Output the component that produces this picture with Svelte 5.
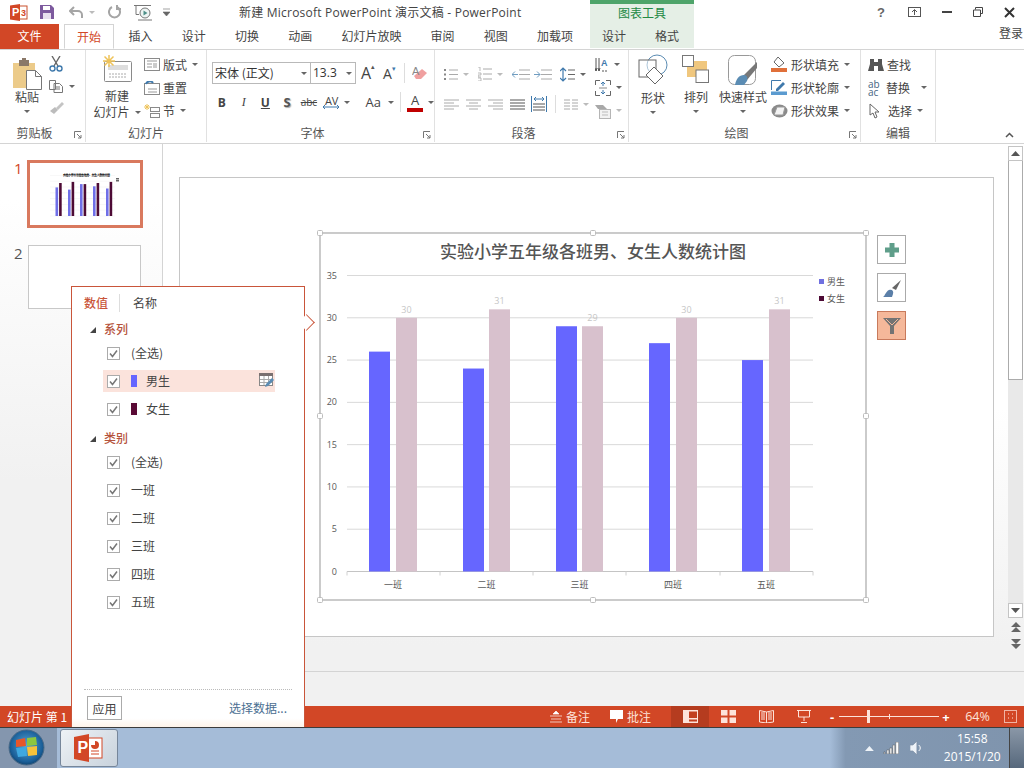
<script>
  const tabs = [['开始',0],['插入',0],['设计',0],['切换',0],['动画',0],['幻灯片放映',0],['审阅',0],['视图',0],['加载项',0]];
  const series = [26,24,29,27,25];
  const female = [30,31,29,30,31];
  const cats = ['一班','二班','三班','四班','五班'];
  const mx = [369,463,556,649,742];
  const fx = [396,489,582,676,769];
  const ticks = [0,5,10,15,20,25,30,35];
  const y0 = 571.5, unit = 8.457;
  const thumbM = [55.5,68,80,93,106];
  const handles = [[320,233],[593,233],[866,233],[320,416],[866,416],[320,600],[593,600],[866,600]];
</script>

{#snippet car(cls = '')}<i class="car {cls}"></i>{/snippet}
{#snippet check()}
  <svg class="cb" width="13" height="13" viewBox="0 0 13 13"><rect x=".5" y=".5" width="12" height="12" fill="#fff" stroke="#ababab"/><path d="M3 6.500 5.500 9.500 10 3.500" fill="none" stroke="#777" stroke-width="1.500"/></svg>
{/snippet}
{#snippet launcher()}
  <svg class="launch" width="8" height="8" viewBox="0 0 8 8"><path d="M.5 7V.5H7M3 3l4 4M7 4v3H4" fill="none" stroke="#777"/></svg>
{/snippet}

<div class="win">
  <header class="title">
    <div class="qat">
      <svg class="q1" width="18" height="17" viewBox="0 0 18 17"><rect x="6" y="2" width="11" height="13" fill="#fff" stroke="#c9502c"/><path d="M0 1.500 10 0v17L0 15.500z" fill="#d24726"/><text x="2" y="12" class="tp">P</text><text x="11" y="12" class="tp3">3</text></svg>
      <svg class="q2" width="14" height="14" viewBox="0 0 14 14"><path d="M0 0h11l3 3v11H0z" fill="#7d5a9e"/><rect x="3" y="1" width="7" height="4" fill="#fff"/><rect x="3" y="8" width="8" height="6" fill="#e8e0ee"/></svg>
      <svg class="q3" width="15" height="13" viewBox="0 0 15 13"><path d="M5 1 1 5l4 4M1 5h8a4 4 0 0 1 4 4v3" fill="none" stroke="#a5a5a5" stroke-width="2"/></svg>
      {@render car('c4 lt')}
      <svg class="q5" width="13" height="14" viewBox="0 0 13 14"><path d="M4 2a5.500 5.500 0 1 0 5 0M9 0v4h4" fill="none" stroke="#a5a5a5" stroke-width="2"/></svg>
      <svg class="q6" width="19" height="17" viewBox="0 0 19 17"><path d="M0 1.500h17M2 1.500v9h3" fill="none" stroke="#777"/><circle cx="11" cy="9" r="5" fill="#eef4f3" stroke="#777"/><path d="m9.500 6.500 4 2.500-4 2.500z" fill="#4e8f88"/><path d="M4 16h14" stroke="#777"/></svg>
      <svg class="q7" width="7" height="8" viewBox="0 0 7 8"><path d="M0 1h7M0 4l3.500 4L7 4z" fill="#666" stroke="#666" stroke-width=".6"/></svg>
    </div>
    <div class="doc">新建 Microsoft PowerPoint 演示文稿 - PowerPoint</div>
    <div class="tool-title"><span>图表工具</span></div>
    <div class="wbtn">
      <b class="help">?</b>
      <svg width="13" height="10" viewBox="0 0 13 10"><rect x=".5" y=".5" width="12" height="9" fill="none" stroke="#555"/><path d="M6.500 8V3M4 5l2.500-2.500L9 5" fill="none" stroke="#555"/></svg>
      <svg width="10" height="4" viewBox="0 0 10 4"><rect y="1" width="10" height="2" fill="#444"/></svg>
      <svg width="10" height="10" viewBox="0 0 10 10"><path d="M2.500 2.500V.5h7v6h-2M.5 3h7v6.500h-7z" fill="none" stroke="#444"/></svg>
      <svg width="11" height="11" viewBox="0 0 11 11"><path d="m1 1 9 9M10 1l-9 9" stroke="#333" stroke-width="2"/></svg>
    </div>
  </header>

  <nav class="tabs">
    <div class="file">文件</div>
    <div class="tab active">开始</div>
    {#each tabs.slice(1) as t}<div class="tab">{t[0]}</div>{/each}
    <div class="ctx"><div class="tab c1">设计</div><div class="tab c2">格式</div></div>
    <div class="login">登录</div>
  </nav>

  <section class="ribbon">
    <div class="grp g1">
      <div class="body">
        <div class="big w-paste">
          <svg width="29" height="32" viewBox="0 0 29 32"><rect x="0" y="5" width="22" height="25" fill="#eccb8a"/><rect x="6" y="2" width="10" height="6" fill="#8a7868"/><rect x="9" y="0" width="4" height="4" fill="#8a7868"/><path d="M13.500 12.500h9l6 6v13h-15z" fill="#fff" stroke="#777"/><path d="M22.500 12.500v6h6" fill="none" stroke="#777"/></svg>
          <span class="l1">粘贴</span>{@render car('block')}
        </div>
        <div class="smallcol sc-clip">
          <svg width="14" height="16" viewBox="0 0 14 16"><path d="M3 0l6 10M11 0 5 10" stroke="#666" stroke-width="1.400"/><circle cx="3.500" cy="12.500" r="2.500" fill="none" stroke="#3f79ac" stroke-width="1.400"/><circle cx="10.500" cy="12.500" r="2.500" fill="none" stroke="#3f79ac" stroke-width="1.400"/></svg>
          <div class="ic"><svg width="15" height="13" viewBox="0 0 15 13"><path d="M.5.500h6v9h-6zM5 3.500h5.500l3 3v6H5z" fill="#fff" stroke="#777"/><path d="M7 7h4M7 9h4" stroke="#777"/></svg>{@render car('ml')}</div>
          <svg width="15" height="13" viewBox="0 0 15 13"><path d="m7 7 6-6 2 2-6 6z" fill="#c4c4c4"/><path d="m1 10 5-4 3 3-4 4z" fill="#bcbcbc"/></svg>
        </div>
      </div>
      <div class="lab lp">剪贴板{@render launcher()}</div>
    </div>

    <div class="grp g2">
      <div class="body">
        <div class="big w-new">
          <svg width="31" height="28" viewBox="0 0 31 28"><rect x="2.500" y="6.500" width="27" height="20" rx="1" fill="#fff" stroke="#8a8a8a"/><rect x="6" y="10" width="20" height="5" fill="#ddd"/><path d="M7 19h18M7 22h18" stroke="#aaa" stroke-dasharray="2 1"/><path d="M7 0v12M1 6h12M2.500 1.500l9 9M11.500 1.500l-9 9" stroke="#eec35a" stroke-width="1.500"/></svg>
          <span class="l1 nw">新建</span><span class="l2">幻灯片{@render car('ml')}</span>
        </div>
        <div class="smallcol sc-slide">
          <div class="ic"><svg width="16" height="13" viewBox="0 0 16 13"><rect x=".5" y=".5" width="15" height="12" fill="#fff" stroke="#8a8a8a"/><path d="M3 3h10M3 6h5M3 9h5" stroke="#999"/><rect x="9" y="5" width="4" height="5" fill="#ccc"/></svg><span>版式</span>{@render car('ml')}</div>
          <div class="ic"><svg width="16" height="14" viewBox="0 0 16 14"><rect x=".5" y="2.500" width="15" height="11" fill="#fff" stroke="#8a8a8a"/><path d="M2 3a4 4 0 0 1 7-1" fill="none" stroke="#3f79ac" stroke-width="2"/><path d="M4 8h9M4 11h9" stroke="#999"/></svg><span>重置</span></div>
          <div class="ic"><svg width="16" height="14" viewBox="0 0 16 14"><rect x="6.500" y="3.500" width="9" height="4" fill="#fff" stroke="#8a8a8a"/><rect x="6.500" y="9.500" width="9" height="4" fill="#fff" stroke="#8a8a8a"/><path d="M3 0v6M0 3h6M1 1l4 4M5 1 1 5" stroke="#eec35a"/></svg><span>节</span>{@render car('ml')}</div>
        </div>
      </div>
      <div class="lab">幻灯片</div>
    </div>

    <div class="grp g3">
      <div class="body col">
        <div class="frow r1">
          <div class="combo cf">宋体 (正文){@render car('end')}</div>
          <div class="combo cs">13.3{@render car('end')}</div>
          <span class="fa big1">A<sup>▴</sup></span>
          <span class="fa">A<sup class="bl">▾</sup></span>
          <i class="sep"></i>
          <svg class="eraser" width="15" height="15" viewBox="0 0 15 15"><path d="m2 13-2-3 8-7 5 4-6 6z" fill="#f0a0a0" transform="translate(2 0)"/><text x="0" y="9" class="era">A</text></svg>
        </div>
        <div class="frow r2">
          <b class="f b">B</b><i class="f it">I</i><u class="f b">U</u><b class="f s">S</b>
          <s class="f abc">abc</s>
          <span class="f av">AV<svg width="16" height="4" viewBox="0 0 16 4"><path d="M0 2h16M2 0 0 2l2 2M14 0l2 2-2 2" fill="none" stroke="#3f79ac"/></svg></span>{@render car('ml0')}
          <i class="sp14"></i>
          <span class="f aa">Aa</span>{@render car('ml')}
          <i class="sep s2"></i>
          <span class="f acol">A<em></em></span>{@render car('ml')}
        </div>
      </div>
      <div class="lab lp">字体{@render launcher()}</div>
    </div>

    <div class="grp g4">
      <div class="body">
        <div class="col pl">
          <div class="frow pr1">
            <svg width="14" height="13" viewBox="0 0 14 13"><path d="M5 2h9M5 6.500h9M5 11h9" stroke="#aaa"/><path d="M0 2h2M0 6.500h2M0 11h2" stroke="#888" stroke-width="2"/></svg>{@render car('ml lt')}
            <svg class="ml10" width="14" height="14" viewBox="0 0 14 14"><path d="M5 2h9M5 7h9M5 12h9" stroke="#aaa"/><path d="M0 0h2v4M0 6h3v2H0v2h3M0 11h3v3H0" fill="none" stroke="#aaa" stroke-width=".8"/></svg>{@render car('ml lt')}
            <svg class="ml10" width="18" height="11" viewBox="0 0 18 11"><path d="M7 1h11M7 5.500h11M7 10h11" stroke="#aaa"/><path d="M0 5.500h6M3 2.500l-3 3 3 3" fill="none" stroke="#6f9cc0"/></svg>
            <svg class="ml4" width="18" height="11" viewBox="0 0 18 11"><path d="M7 1h11M7 5.500h11M7 10h11" stroke="#aaa"/><path d="M0 5.500h6M3 2.500l3 3-3 3" fill="none" stroke="#6f9cc0"/></svg>
            <svg class="ml8" width="15" height="15" viewBox="0 0 15 15"><path d="M3 1v13M0 4l3-3 3 3M0 11l3 3 3-3" fill="none" stroke="#3f79ac" stroke-width="1.200"/><path d="M8 3h7M8 7.500h7M8 12h7" stroke="#666"/></svg>{@render car('ml')}
          </div>
          <div class="frow pr2">
            <svg width="15" height="11" viewBox="0 0 15 11"><path d="M0 1h15M0 4h10M0 7h15M0 10h10" stroke="#aaa"/></svg>
            <svg class="ml7" width="15" height="11" viewBox="0 0 15 11"><path d="M0 1h15M3 4h9M0 7h15M3 10h9" stroke="#aaa"/></svg>
            <svg class="ml7" width="15" height="11" viewBox="0 0 15 11"><path d="M0 1h15M5 4h10M0 7h15M5 10h10" stroke="#aaa"/></svg>
            <svg class="ml7" width="15" height="11" viewBox="0 0 15 11"><path d="M0 1h15M0 4h15M0 7h15M0 10h15" stroke="#555"/></svg>
            <svg class="ml6" width="16" height="16" viewBox="0 0 16 16"><path d="M.5 0v16M15.500 0v16" stroke="#3f79ac"/><path d="M3 3h10M5 1 3 3l2 2M11 1l2 2-2 2" fill="none" stroke="#3f79ac"/><path d="M2 8h12M2 11h12M2 14h12" stroke="#555"/></svg>
            <i class="sep s3"></i>
            <svg width="14" height="11" viewBox="0 0 14 11"><path d="M0 1h6M0 4h6M0 7h6M0 10h6M8 1h6M8 4h6M8 7h6M8 10h6" stroke="#aaa"/></svg>{@render car('ml lt')}
          </div>
        </div>
        <div class="smallcol sc-para">
          <div class="ic"><svg width="14" height="16" viewBox="0 0 14 16"><path d="M1 1v13M4 1v13M0 11l1 3 1-3M3 11l1 3 1-3" fill="none" stroke="#555"/><path d="M7 14h2M10 14h2" stroke="#555"/><text x="6" y="9" class="para-a">A</text></svg>{@render car('ml')}</div>
          <div class="ic"><svg width="16" height="16" viewBox="0 0 16 16"><path d="M.5 5V.500H5M11 .500h4.500V5M.5 11v4.500H5M11 15.500h4.500V11" fill="none" stroke="#666"/><path d="M8 2v4M6 4l2-2 2 2M8 14v-4M6 12l2 2 2-2" fill="none" stroke="#3f79ac"/><path d="M4 8h8" stroke="#888"/></svg>{@render car('ml')}</div>
          <div class="ic"><svg width="16" height="16" viewBox="0 0 16 16"><path d="M0 2h8l4 4H3z" fill="#a8a8a8"/><rect x="4.500" y="6.500" width="11" height="9" fill="#f2f2f2" stroke="#b5b5b5"/><path d="M7 9h6M7 12h6" stroke="#bbb"/></svg>{@render car('ml lt')}</div>
        </div>
      </div>
      <div class="lab lp">段落{@render launcher()}</div>
    </div>

    <div class="grp g5">
      <div class="body">
        <div class="big w-shape">
          <svg width="30" height="31" viewBox="0 0 30 31"><circle cx="19" cy="11" r="10" fill="#fff" stroke="#5b8cb3"/><rect x="1" y="6" width="17" height="17" fill="#fff" stroke="#666" fill-opacity=".5"/><path d="m16 13 9 9-8 8-9-9z" fill="#fff" stroke="#666"/></svg>
          <span class="l1">形状</span>{@render car('block')}
        </div>
        <div class="big w-arr">
          <svg width="28" height="30" viewBox="0 0 28 30"><rect x="5" y="6" width="20" height="16" fill="#f0c77e"/><rect x=".5" y=".5" width="11" height="11" fill="#fff" stroke="#777"/><rect x="14" y="15" width="12.500" height="12.500" fill="#fff" stroke="#777"/></svg>
          <span class="l1">排列</span>{@render car('block')}
        </div>
        <div class="big w-quick">
          <svg width="30" height="31" viewBox="0 0 30 31"><rect x=".5" y=".5" width="27" height="29" rx="6" fill="#fff" stroke="#999"/><path d="M15 21 29 7v6L19 25z" fill="#777"/><path d="M7 30c1-6 4-10 9-10 3 0 4 3 3 6l-3 4z" fill="#5b8cb3"/></svg>
          <span class="l1">快速样式</span>{@render car('block')}
        </div>
        <div class="smallcol sc-draw">
          <div class="ic"><svg width="17" height="15" viewBox="0 0 17 15"><path d="m7 0 6 6-5 4-5-5z" fill="#fff" stroke="#666"/><rect y="11" width="16" height="4" fill="#e0703a"/></svg><span>形状填充</span>{@render car('ml')}</div>
          <div class="ic"><svg width="17" height="15" viewBox="0 0 17 15"><path d="M.5 10V.5H10" fill="none" stroke="#3f79ac"/><path d="m5 9 7-7 2 2-7 7H5z" fill="#3f79ac"/><rect y="11.500" width="16" height="3.500" fill="#5b9bd0"/></svg><span>形状轮廓</span>{@render car('ml')}</div>
          <div class="ic"><svg width="17" height="14" viewBox="0 0 17 14"><ellipse cx="8.500" cy="7" rx="8" ry="6.500" fill="#8a8a8a"/><path d="M3 11 6 3h8l-2 8z" fill="#f3f3f3" stroke="#999"/></svg><span>形状效果</span>{@render car('ml')}</div>
        </div>
      </div>
      <div class="lab lp">绘图{@render launcher()}</div>
    </div>

    <div class="grp g6">
      <div class="body">
        <div class="smallcol sc-edit">
          <div class="ic"><svg width="16" height="14" viewBox="0 0 16 14"><path d="M2 1h4v3h4V1h4v5l2 7H10V8H6v5H0l2-7z" fill="#555"/></svg><span>查找</span></div>
          <div class="ic"><span class="abac">ab ac</span><span>替换</span>{@render car('ml7')}</div>
          <div class="ic"><svg class="arrow" width="11" height="16" viewBox="0 0 11 16"><path d="M1 1v11l3-2 2 5 2-1-2-5h4z" fill="#fff" stroke="#666"/></svg><span>选择</span>{@render car('ml')}</div>
        </div>
      </div>
      <div class="lab">编辑</div>
    </div>
    <svg class="collapse" width="9" height="6" viewBox="0 0 9 6"><path d="m1 5 3.500-3.500L8 5" fill="none" stroke="#555" stroke-width="1.500"/></svg>
  </section>

  <main class="main">
    <aside class="thumbs">
      <div class="thumbrow first"><span class="num on">1</span>
        <div class="thumb sel">
          <svg width="110" height="62" viewBox="30 163 110 62">
            <text x="86.500" y="175.500" text-anchor="middle" class="tt">实验小学五年级各班男、女生人数统计图</text>
            {#each [0,1,2,3,4,5,6,7] as i}<path d="M50 {216 - i*5.800}h65" stroke="#eee" stroke-width=".5"/>{/each}
            {#each thumbM as x, i}
              <rect x={x} y={216-series[i]*1.1} width="2.600" height={series[i]*1.1} fill="#6f6fe8"/>
              <rect x={x+3.600} y={216-female[i]*1.1} width="2.600" height={female[i]*1.1} fill="#4d0a35"/>
            {/each}
            <rect x="116" y="178" width="3" height="1.500" fill="#666"/><rect x="116" y="180" width="3" height="1.500" fill="#666"/>
          </svg>
        </div>
      </div>
      <div class="thumbrow second"><span class="num">2</span><div class="thumb"></div></div>
    </aside>

    <div class="canvas">
      <div class="slide">
        <div class="chart">
          <svg width="556" height="376" viewBox="316 229 556 376">
            <rect x="320" y="233" width="546" height="367" fill="#fff" stroke="#b5b5b5" stroke-width="1.400"/>
            <text x="593" y="258" text-anchor="middle" class="ctitle">实验小学五年级各班男、女生人数统计图</text>
            {#each ticks as t}
              {#if t>0}<path d="M347 {y0-t*unit}H813" stroke="#d9d9d9"/>{/if}
              <text x="337" y={y0-t*unit+3} text-anchor="end" class="ax">{t}</text>
            {/each}
            <path d="M347 571.500H813" stroke="#c4c4c4"/>
            {#each [347,440,533,626,720,813] as x}<path d="M{x} 571.500v4" stroke="#d0d0d0"/>{/each}
            {#each cats as c, i}
              <rect x={mx[i]} y={y0-series[i]*unit} width="21" height={series[i]*unit} fill="#6666ff"/>
              <rect x={fx[i]} y={y0-female[i]*unit} width="21" height={female[i]*unit} fill="#d8c1cd"/>
              <text x={fx[i]+10.500} y={y0-female[i]*unit-5} text-anchor="middle" class="dl">{female[i]}</text>
              <text x={(mx[i]+fx[i]+21)/2} y="588" text-anchor="middle" class="cat">{c}</text>
            {/each}
            <rect x="819" y="279" width="5" height="5" fill="#7070e0"/><text x="827" y="285" class="cat">男生</text>
            <rect x="819" y="296" width="5" height="5" fill="#4d0a35"/><text x="827" y="302" class="cat">女生</text>
            {#each handles as h}<rect x={h[0]-2.500} y={h[1]-2.500} width="5" height="5" rx="1" fill="#fff" stroke="#bdbdbd"/>{/each}
          </svg>
        </div>
        <div class="side">
          <button class="sb"><svg width="18" height="18" viewBox="0 0 18 18"><path d="M6.500 2h5v4.500H16v5h-4.500V16h-5v-4.500H2v-5h4.500z" fill="#5f9e8a"/></svg></button>
          <button class="sb"><svg width="20" height="20" viewBox="0 0 20 20"><path d="m10 10 9-8-5 10z" fill="#666"/><path d="M1 19c2-1 3-6 6-7 3-1 5 1 4 4l-1 3z" fill="#5b7fa8"/></svg></button>
          <button class="sb on"><svg width="20" height="20" viewBox="0 0 20 20"><path d="M1 2h18l-7 8v8H8v-8z" fill="#737373"/><path d="m4 3 6 6 6-6" fill="none" stroke="#f5b89a" stroke-width="1"/></svg></button>
        </div>
      </div>
    </div>

    <div class="vs">
      <div class="sbtn"><svg width="9" height="5" viewBox="0 0 9 5"><path d="M0 5 4.500 0 9 5z" fill="#555"/></svg></div>
      <div class="track"><div class="thumbbar"></div></div>
      <div class="sbtn"><svg width="9" height="5" viewBox="0 0 9 5"><path d="M0 0 4.500 5 9 0z" fill="#555"/></svg></div>
      <svg class="dbl" width="10" height="10" viewBox="0 0 10 10"><path d="M5 0 10 5H0zM5 5l5 5H0z" fill="#666"/></svg>
      <svg class="dbl d2" width="10" height="10" viewBox="0 0 10 10"><path d="M0 0h10L5 5zM0 5h10l-5 5z" fill="#666"/></svg>
    </div>
  </main>

  <footer class="status">
    <span class="st-left">幻灯片 第 1</span>
    <div class="st-right">
      <span class="st-i"><svg width="12" height="12" viewBox="0 0 12 12"><path d="M3 3l3-3 3 3zM0 5h12M1 8h10M0 11h12" fill="#fff" stroke="#fff" stroke-width=".7"/></svg>备注</span>
      <span class="st-i st2"><svg width="13" height="13" viewBox="0 0 13 13"><path d="M0 0h13v9H8l-2 4V9H0z" fill="#fff"/></svg>批注</span>
      <span class="view on"><svg width="15" height="13" viewBox="0 0 15 13"><rect width="15" height="13" fill="#fde3da"/><rect x="6" y="1.500" width="8" height="6.500" fill="#c23f1f"/><rect x="6" y="9.500" width="8" height="2" fill="#c23f1f"/></svg></span>
      <span class="view"><svg width="15" height="13" viewBox="0 0 15 13"><path d="M0 0h6.500v5.500H0zM8.500 0H15v5.500H8.500zM0 7.500h6.500V13H0zM8.500 7.500H15V13H8.500z" fill="#fde3da"/></svg></span>
      <span class="view"><svg width="15" height="13" viewBox="0 0 15 13"><path d="M.5.500 7.500 2l7-1.500v11.500l-7 1-7-1z" fill="none" stroke="#fde3da"/><path d="M2 3h4M2 5h4M2 7h4M2 9h4M9 3h4M9 5h4M9 7h4M9 9h4M7.500 2v11" stroke="#fde3da"/></svg></span>
      <span class="view"><svg width="14" height="13" viewBox="0 0 14 13"><path d="M0 .5h14M1.500.5v6.500h11V.5M7 7v4M4 12.500h6" fill="none" stroke="#fde3da"/></svg></span>
      <div class="zoom">
        <b class="zb">-</b>
        <div class="zs"><i class="zt"></i><i class="zk"></i></div>
        <b class="zb">+</b>
      </div>
      <span class="pct">64%</span>
      <svg class="fit" width="13" height="13" viewBox="0 0 13 13"><rect x=".5" y=".5" width="12" height="12" fill="none" stroke="#fde3da" stroke-opacity=".7"/><path d="M4 4h1M8 4h1M4 8h1M8 8h1" stroke="#fde3da"/></svg>
    </div>
  </footer>

  <div class="taskbar">
    <div class="startzone">
      <svg width="37" height="37" viewBox="0 0 37 37"><defs><radialGradient id="orb" cx=".5" cy=".45" r=".6"><stop offset="0" stop-color="#58a8d8"/><stop offset=".75" stop-color="#1a5f99"/><stop offset="1" stop-color="#0c3a60"/></radialGradient></defs><circle cx="18.500" cy="18.500" r="17.500" fill="url(#orb)" stroke="#4a6a88"/><path d="m8 11 9-2 1 8-10 1z" fill="#e8562a"/><path d="m19 9 9-1 1 8-10 1z" fill="#8cc63f"/><path d="m8 19 10-1 1 9-9 1z" fill="#3fa8e0"/><path d="m19 18 10-1 0 9-9 1z" fill="#f5c23a"/></svg>
    </div>
    <div class="tb-app">
      <svg width="30" height="28" viewBox="0 0 30 28"><rect x="14" y="4" width="14" height="20" fill="#fff" stroke="#d24726"/><path d="M21 7a4 4 0 1 1-4 4h4z" fill="#d24726"/><path d="M17 17h8M17 20h8" stroke="#d24726"/><path d="M0 3 15 0v28L0 25z" fill="#d24726"/><text x="3.500" y="19" class="tbp">P</text></svg>
    </div>
    <div class="tray">
      <svg width="9" height="5" viewBox="0 0 9 5"><path d="M0 5 4.500 0 9 5z" fill="#eef3f8"/></svg>
      <svg width="16" height="12" viewBox="0 0 16 12"><path d="M1 10h1v2H1zM4 8h2v4H4zM7 6h2v6H7zM10 3h2v9h-2zM13 0h3v12h-3z" fill="#fff" stroke="#555" stroke-width=".5"/></svg>
      <svg width="13" height="14" viewBox="0 0 13 14"><path d="M0 4h3l4-4v14l-4-4H0z" fill="#eef3f8" stroke="#7a8ba0" stroke-width=".6"/><path d="M9 4c2 2 2 4 0 6" fill="none" stroke="#fff"/></svg>
      <div class="clock"><div>15:58</div><div>2015/1/20</div></div>
      <div class="showdesk"></div>
    </div>
  </div>

  <div class="pop">
    <div class="arrow-out"></div>
    <div class="ptabs"><span class="pt on">数值</span><i></i><span class="pt">名称</span></div>
    <div class="sec"><i class="tri"></i>系列</div>
    <div class="item">{@render check()}<span>(全选)</span></div>
    <div class="item hl">{@render check()}<i class="sw" style="background:#6666ff"></i><span class="ser">男生</span>
      <svg class="edit" width="16" height="15" viewBox="0 0 16 15"><rect x=".5" y=".5" width="13" height="12" fill="#fff" stroke="#888"/><rect x="0" y="0" width="14" height="3" fill="#7a7070"/><path d="M5 3v9M9.500 3v9M1 6.500h12M1 9.500h12" stroke="#aaa"/><path d="m6 14 1-3 6-6 2 2-6 6z" fill="#5b8cb3"/></svg>
    </div>
    <div class="item">{@render check()}<i class="sw" style="background:#5a0a35"></i><span class="ser">女生</span></div>
    <div class="sec sec2"><i class="tri"></i>类别</div>
    <div class="item">{@render check()}<span>(全选)</span></div>
    {#each cats as c}<div class="item">{@render check()}<span>{c}</span></div>{/each}
    <div class="pfoot">
      <button class="apply">应用</button>
      <span class="sel-data">选择数据...</span>
    </div>
  </div>
</div>

<style>
  :global(body){margin:0;background:#fff}
  .win{position:relative;width:1024px;height:768px;overflow:hidden;display:flex;flex-direction:column;background:#fff;font:12px/16px "Noto Sans CJK SC","Noto Sans",sans-serif;color:#444}
  i,em{font-style:normal}
  .car{display:inline-block;width:0;height:0;border:3px solid transparent;border-top:3px solid #666;border-bottom:0}
  .car.ml{margin-left:5px}.car.ml7{margin-left:11px}.car.ml0{margin-left:3px}.car.lt{border-top-color:#bbb}
  .car.block{display:block;margin:5px auto 0}
  .car.end{margin-left:auto;margin-right:3px}

  .title{height:24px;display:flex;align-items:center;position:relative;flex:none}
  .qat{display:flex;align-items:center;width:239px;flex:none;padding-left:10px;box-sizing:border-box}
  .q2{margin-left:12px}.q3{margin-left:15px}.car.c4{margin-left:5px}.q5{margin-left:13px}.q6{margin-left:13px}.q7{margin-left:10px}
  .tp{font:bold 11px "Liberation Sans";fill:#fff}.tp3{font:bold 9px "Liberation Sans";fill:#d24726}
  .doc{width:351px;flex:none;font:12px/16px "Open Sans","Noto Sans CJK SC",sans-serif;letter-spacing:.22px;color:#444;white-space:nowrap;padding-top:1px;box-sizing:border-box}
  .tool-title{width:104px;height:24px;flex:none;box-sizing:border-box;border-top:4px solid #4ea46a;background:#e5efe6;color:#238a44;text-align:center;font-size:12px;line-height:17px}
  .wbtn{margin-left:auto;display:flex;align-items:center;gap:21px;padding-right:9px}
  .help{font:bold 13px "Liberation Sans";color:#666;margin-right:2px}

  .tabs{height:25px;display:flex;align-items:stretch;flex:none;position:relative;background:#fff}
  .file{width:59px;background:#d24726;color:#fff;text-align:center;line-height:24px;flex:none}
  .tab{padding:0 14.600px;line-height:24px;white-space:nowrap;color:#444}
  .tab.active{margin-left:5px;margin-right:0;width:50px;padding:0;text-align:center;box-sizing:border-box;border:1px solid #d4d4d4;border-bottom:1px solid #fff;color:#d24726;line-height:23px;height:25px;position:relative;z-index:1}
  .ctx{position:absolute;left:590px;top:0;width:104px;height:24px;background:#e5efe6;display:flex}
  .tab.c1{padding:0 0 0 12px}.tab.c2{padding:0 0 0 29px}
  .login{position:absolute;left:999px;top:0;line-height:18px;white-space:nowrap}

  .ribbon{height:95px;display:flex;flex:none;border-top:1px solid #d4d4d4;border-bottom:1px solid #d4d4d4;box-sizing:border-box;position:relative;background:#fff}
  .grp{display:flex;flex-direction:column;height:92px;box-sizing:border-box;border-right:1px solid #e1e1e1;flex:none}
  .g1{width:86px}.g2{width:121px}.g3{width:228px}.g4{width:194px}.g5{width:232px}.g6{width:75px}
  .body{flex:1;display:flex;min-height:0;position:relative}
  .body.col{flex-direction:column}
  .col{display:flex;flex-direction:column}
  .lab{height:17px;text-align:center;line-height:15px;position:relative;color:#555;box-sizing:border-box}
  .lp{padding-right:16px}
  .launch{position:absolute;right:3px;bottom:3px}
  .big{display:flex;flex-direction:column;align-items:center;flex:none;text-align:center}
  .l1{margin-top:4px;white-space:nowrap;line-height:16px}
  .w-paste{margin-left:9px;width:36px;padding-top:8px;box-sizing:border-box}
  .w-paste .l1{margin-top:-1px}
  .smallcol{display:flex;flex-direction:column;padding-top:3px}
  .ic{display:flex;align-items:center;height:23px;white-space:nowrap}
  .ic span{margin-left:3px}
  .sc-clip{margin-left:4px;padding-top:6px;gap:8px}
  .sc-clip .ic{height:13px}
  .w-new{width:50px;margin-left:6px;padding-top:5px;box-sizing:border-box}
  .w-new .nw{margin-top:5px}
  .l2{white-space:nowrap;display:flex;align-items:center;line-height:16px}
  .sc-slide{margin-left:2px;padding-top:3px}

  .frow{display:flex;align-items:center}
  .r1{margin:12px 0 0 5px;height:22px}
  .combo{height:22px;box-sizing:border-box;border:1px solid #b9b9b9;display:flex;align-items:center;padding-left:2px;white-space:nowrap;color:#333;font-size:12px}
  .cf{width:99px}.cs{width:46px;margin-left:-1px;font-family:"Open Sans",sans-serif;font-size:12px}
  .fa{font:14px "Open Sans",sans-serif;color:#444;margin-left:2px;width:16px;display:flex;align-items:flex-start}
  .fa.big1{font-size:16px;margin-left:5px;width:20px}
  .fa sup{font-size:7px;line-height:9px;color:#555}.fa sup.bl{color:#3f79ac}
  .sep{width:1px;background:#ddd;height:20px;margin-left:5px;display:block}
  .eraser{margin-left:7px}
  .era{font:11px "Liberation Sans";fill:#888}
  .r2{margin:7px 0 0 4px;height:22px}
  .f{width:22px;text-align:center;font:12px "Open Sans",sans-serif;color:#444;display:block}
  .f.b{font-weight:700}.f.it{font-family:"Liberation Serif";font-style:italic}.f.s{font-weight:700;color:#555;text-shadow:1px 1px 1px #aaa;font-size:13px}
  .f.abc{font-size:10px}
  .f.av{width:18px;font-size:11px;line-height:9px;margin-left:3px}.f.av svg{display:block}
  .sp14{width:14px}
  .f.aa{width:20px;font-size:13px}
  .sep.s2{margin-left:6px;height:20px;margin-right:6px}
  .f.acol{width:16px;font-size:13px;line-height:14px;position:relative}
  .f.acol em{display:block;height:4px;background:#c00000;margin-top:1px}

  .pl{width:159px;padding-left:9px;box-sizing:content-box;flex:none}
  .pr1{margin-top:15px;height:18px}
  .ml10{margin-left:9px}.ml4{margin-left:4px}.ml8{margin-left:8px}.ml7{margin-left:7px}.ml6{margin-left:6px}
  .pr2{margin-top:12px;height:18px}
  .sep.s3{margin:0 8px;height:18px}
  .sc-para{margin-left:-8px}
  .para-a{font:bold 9px "Liberation Sans";fill:#3f79ac}

  .w-shape{width:40px;margin-left:4px;padding-top:4px;box-sizing:border-box}
  .w-shape .l1{margin-top:5px}
  .w-arr{width:40px;margin-left:3px;padding-top:5px;box-sizing:border-box}
  .w-arr .l1{margin-top:4px}
  .w-quick{width:50px;margin-left:2px;padding-top:5px;box-sizing:border-box}
  .w-quick .l1{margin-top:3px}
  .sc-draw{margin-left:3px}
  .sc-edit{margin-left:7px}
  .abac{display:block;width:15px;white-space:normal;font:10px/8px "Open Sans",sans-serif;color:#46657f;margin:0 !important}
  .abac + span{margin-left:3px}
  .arrow{margin-left:1px;margin-right:5px}
  .collapse{position:absolute;right:10px;bottom:5px}

  .main{flex:1;min-height:0;display:flex;position:relative;background:#f1f1f1}
  .thumbs{width:163px;flex:none;box-sizing:border-box;border-right:1px solid #d4d4d4;background:linear-gradient(#fff 10%,#f1f1f1 60%)}
  .thumbrow{display:flex;position:relative}
  .first{margin:16px 0 0 14px}.second{margin:17px 0 0 14px}
  .num{width:13px;font:15px/16px "Open Sans",sans-serif;color:#555}.num.on{color:#d24726}
  .thumb{box-sizing:border-box;width:113px;height:64px;border:1px solid #c8c8c8;background:#fff;margin-left:1px}
  .thumb.sel{width:116px;height:68px;border:3px solid #d9795e;margin-left:0}
  .thumb svg{display:block}
  .tt{font:2.600px "Noto Sans CJK SC",sans-serif;fill:#222;stroke:#222;stroke-width:.25px;font-weight:700}
  .canvas{flex:1;min-width:0;position:relative;height:528px;border-bottom:1px solid #d4d4d4;background:linear-gradient(#fff 50%,#f1f1f1 95%);padding:33px 14px 0 16px;box-sizing:border-box}
  .slide{height:460px;box-sizing:border-box;border:1px solid #c6c6c6;background:#fff;position:relative}
  .chart{position:absolute;left:136px;top:51px;line-height:0}
  .ctitle{font:500 17px "Noto Sans CJK SC",sans-serif;fill:#555}
  .ax{font:9px "Open Sans",sans-serif;fill:#595959}
  .dl{font:9px "Open Sans",sans-serif;fill:#c6c6c6}
  .cat{font:9px "Noto Sans CJK SC",sans-serif;fill:#595959}
  .side{position:absolute;left:697px;top:57px;display:flex;flex-direction:column;gap:9px}
  .sb{width:29px;height:29px;padding:0;box-sizing:border-box;border:1px solid #aaa;background:#fff;display:flex;align-items:center;justify-content:center}
  .sb.on{background:#f5b89a;border-color:#c87a5c}
  .vs{width:16px;flex:none;height:528px;box-sizing:border-box;padding:2px 1px 0 0;border-bottom:1px solid #d4d4d4;background:linear-gradient(#fff 50%,#f1f1f1 95%);display:flex;flex-direction:column;align-items:stretch}
  .sbtn{height:15px;flex:none;box-sizing:border-box;border:1px solid #c4c4c4;background:#fff;display:flex;align-items:center;justify-content:center}
  .track{height:442px;flex:none;background:#e9e9e9}
  .thumbbar{height:219px;box-sizing:border-box;border:1px solid #ababab;border-top:0;background:#fff}
  .dbl{display:block;margin:4px 0 0 3px;flex:none}
  .dbl.d2{margin-top:7px}

  .status{height:21px;flex:none;background:#d24726;color:#fff;display:flex;align-items:center;position:relative}
  .st-left{margin-left:7px;white-space:nowrap}
  .st-right{margin-left:auto;display:flex;align-items:center;height:100%;padding-right:7px}
  .st-i{display:flex;align-items:center;gap:4px;color:#fde3da}
  .st2{margin-left:20px;margin-right:20px}
  .view{width:38px;height:100%;display:flex;align-items:center;justify-content:center}
  .view.on{background:#b53c1f}
  .zoom{display:flex;align-items:center;margin-left:3px}
  .zb{font:bold 13px "Open Sans",sans-serif;color:#fff;width:12px;text-align:center}
  .zs{width:100px;height:1px;background:#fde3da;position:relative;margin:0 1px}
  .zt{position:absolute;left:50px;top:-2px;width:1px;height:5px;background:#fde3da}
  .zk{position:absolute;left:28px;top:-6px;width:3px;height:13px;background:#fde3da}
  .pct{width:51px;text-align:center;color:#fde3da;font:12.500px "Open Sans",sans-serif}
  .fit{margin-left:1px}

  .taskbar{height:41px;flex:none;background:#a5bcd8;display:flex;position:relative;border-top:1px solid #3c3c3c;box-sizing:border-box}
  .startzone{width:57px;background:#8496ae;padding:1px 0 0 8px;box-sizing:border-box;flex:none}
  .tb-app{width:58px;margin:1px 0 0 3px;height:38px;box-sizing:border-box;border:1px solid #76869a;border-radius:3px;background:linear-gradient(135deg,#eef2f6,#c8d2dc);display:flex;align-items:center;justify-content:center}
  .tbp{font:bold 16px "Liberation Sans";fill:#fff}
  .tray{margin-left:auto;width:194px;height:100%;display:flex;align-items:center;background:linear-gradient(90deg,#a5bcd8,#8399b3 8%,#7f94ad);padding-left:35px;box-sizing:border-box}
  .tray svg:nth-child(2){margin-left:9px}
  .tray svg:nth-child(3){margin-left:11px}
  .clock{color:#fff;text-align:center;width:74px;margin-left:13px;font:12px/18px "Open Sans",sans-serif;flex:none}
  .showdesk{width:14px;height:100%;margin-left:auto;background:linear-gradient(#8a97a7,#56687c);border-left:1px solid #444}

  .pop{position:absolute;left:71px;top:286px;width:234px;height:441px;box-sizing:border-box;border:1px solid #c9553a;border-bottom:0;padding:7px 0 0 0;display:flex;flex-direction:column;z-index:5;background:linear-gradient(#fff 98%,#fff4ea)}
  .arrow-out{position:absolute;right:-9px;top:29px;width:13px;height:13px;background:#fff;border:1px solid #c9553a;border-left:0;border-bottom:0;transform:rotate(45deg) scale(.9);box-sizing:border-box}
  .ptabs{display:flex;align-items:center;height:18px;padding-left:12px}
  .ptabs i{width:1px;height:18px;background:#ddd;margin:0 13px 0 11px}
  .pt.on{color:#c9553a;font-weight:500}
  .sec{height:18px;margin-top:8px;padding-left:32px;color:#b5533c;font-weight:500;position:relative;line-height:18px}
  .sec2{margin-top:9px}
  .tri{position:absolute;left:18px;top:7px;width:0;height:0;border-style:solid;border-width:0 0 6px 6px;border-color:transparent transparent #444 transparent}
  .item{display:flex;align-items:center;height:22px;margin:6px 29px 0 31px;padding-left:4px;position:relative}
  .sec + .item{margin-top:4px}
  .item .cb{flex:none;margin-right:11px}
  .item.hl{background:#fbe3dc}
  .sw{width:6px;height:12px;margin-right:9px}
  .edit{position:absolute;right:0;top:3px}
  .pfoot{margin:auto 12px 0;height:37px;border-top:1px dotted #bbb;display:flex;align-items:flex-start;justify-content:space-between;padding:6px 5px 0 3px;box-sizing:border-box;position:relative;top:-1px}
  .apply{width:35px;height:24px;padding:0;box-sizing:border-box;border:1px solid #ababab;background:#fff;font:12px "Noto Sans CJK SC",sans-serif;color:#444}
  .sel-data{color:#4b6f92;line-height:24px}
</style>
